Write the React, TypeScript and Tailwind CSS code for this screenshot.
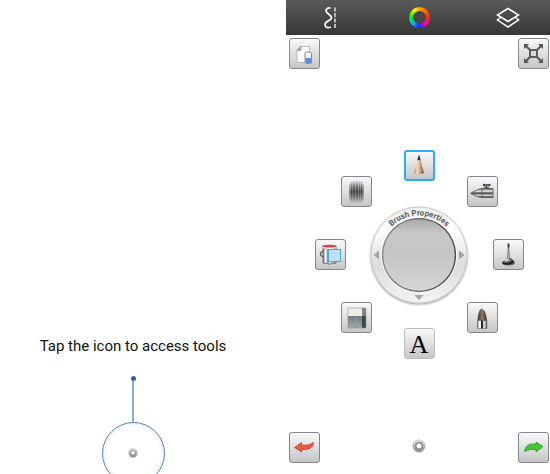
import React from 'react';

interface ToolButtonProps {
  label: string;
  active?: boolean;
  soft?: boolean;
  children: React.ReactNode;
}

const ToolButton: React.FC<ToolButtonProps> = ({ label, active, soft, children }) => {
  const border = active ? 'border-2 border-[#2ab0ee]' : soft ? 'border border-[#bcbcc0]' : 'border border-[#85858d]';

  return (
    <button
      type="button"
      aria-label={label}
      className={`flex size-[31px] shrink-0 items-center justify-center rounded-[3px] bg-linear-to-b from-[#f9f9f9] to-[#c6c6c8] ${border}`}
    >
      {children}
    </button>
  );
};

const Glyph: React.FC<{ children: React.ReactNode }> = ({ children }) => (
  <svg viewBox="1 1 29 29" className="size-[29px] shrink-0" fill="none" aria-hidden="true">
    {children}
  </svg>
);

const PencilIcon = () => (
  <Glyph>
    <defs>
      <linearGradient id="wood" x1="0" x2="1">
        <stop offset="0" stopColor="#a9825f" />
        <stop offset=".3" stopColor="#f6dfc4" />
        <stop offset=".55" stopColor="#dcb48c" />
        <stop offset="1" stopColor="#79482a" />
      </linearGradient>
    </defs>
    <path d="M15 5 L20 23 Q15 25.5 10 23 Z" fill="url(#wood)" />
    <path d="M15 4.5 L16.8 10.5 L15 9.8 L13.2 10.5 Z" fill="#2c2c30" />
  </Glyph>
);

const SmudgeIcon = () => (
  <Glyph>
    <defs>
      <linearGradient id="smudge" x1="0" x2="0" y1="0" y2="1">
        <stop offset="0" stopColor="#333" stopOpacity=".05" />
        <stop offset=".3" stopColor="#333" stopOpacity=".8" />
        <stop offset=".5" stopColor="#1c1c1c" />
        <stop offset=".7" stopColor="#333" stopOpacity=".8" />
        <stop offset="1" stopColor="#333" stopOpacity=".05" />
      </linearGradient>
    </defs>
    <rect x="9" y="5" width="13" height="22" fill="url(#smudge)" opacity=".6" />
    <path
      d="M8 8h1v16H8zM10 6h1v19h-1zM12 4h2v23h-2zM15 4h2v23h-2zM18 5h1v22h-1zM20 5h1v21h-1zM22 8h1v16h-1z"
      fill="url(#smudge)"
      opacity=".45"
    />
  </Glyph>
);

const AirbrushIcon = () => (
  <Glyph>
    <defs>
      <linearGradient id="airbrush" x1="0" x2="0" y1="0" y2="1">
        <stop offset="0" stopColor="#555" />
        <stop offset=".3" stopColor="#f1f1f1" />
        <stop offset=".52" stopColor="#3d3d3d" />
        <stop offset=".75" stopColor="#e2e2e2" />
        <stop offset="1" stopColor="#222" />
      </linearGradient>
    </defs>
    <path
      d="M4 17 L11 13.5 Q13 12.5 16 12.5 H26 V21.5 H15 Q11 21.5 4 17.7 Z"
      fill="url(#airbrush)"
      stroke="#555"
      strokeWidth=".8"
    />
    <path d="M15 13v8.4" stroke="#555" strokeWidth=".8" />
    <path d="M16.5 9h6M19.5 8v5M17 11.5h5" stroke="#555" strokeWidth="1.5" />
    <circle cx="17" cy="9" r="1.2" fill="#444" />
    <circle cx="22.5" cy="9" r="1.2" fill="#444" />
  </Glyph>
);

const FillIcon = () => (
  <Glyph>
    <defs>
      <linearGradient id="can" x1="0" x2="1">
        <stop offset="0" stopColor="#666" />
        <stop offset=".2" stopColor="#fff" />
        <stop offset=".35" stopColor="#999" />
        <stop offset=".55" stopColor="#f5f5f5" />
        <stop offset="1" stopColor="#777" />
      </linearGradient>
    </defs>
    <path d="M8 12 Q5 13 5.5 16 L8 18" stroke="#555" strokeWidth="1.2" />
    <path d="M8 9 H21 V24 Q14 26 8 24 Z" fill="url(#can)" stroke="#666" strokeWidth=".8" />
    <path d="M7.5 9.500 Q14 11.500 21.500 9.500 V7 H7.500 Z" fill="#f4f4f4" stroke="#888" strokeWidth=".6" />
    <path d="M8 6.500 Q14 5 21 6.500 V8 Q14 9 8 8 Z" fill="#cf4642" />
    <rect x="13.5" y="10.5" width="12" height="12" fill="#b9e0f4" stroke="#4ba7d7" />
  </Glyph>
);

const PaintIcon = () => (
  <Glyph>
    <defs>
      <radialGradient id="foot" cx=".35" cy=".25" r=".8">
        <stop offset="0" stopColor="#fff" />
        <stop offset=".3" stopColor="#888" />
        <stop offset=".65" stopColor="#151515" />
        <stop offset="1" stopColor="#777" />
      </radialGradient>
    </defs>
    <path d="M15.500 5L14.500 20H16.500Z" fill="#ddd" stroke="#707070" strokeWidth=".9" />
    <path d="M15.500 4.500v4" stroke="#333" strokeWidth="1.8" />
    <path d="M13.5 19 H17.5 Q20 20.5 22 23.5 Q22 26.5 15.5 26.5 Q9 26.5 9 23.5 Q11 20.5 13.5 19 Z" fill="url(#foot)" />
  </Glyph>
);

const EraserIcon = () => (
  <Glyph>
    <defs>
      <linearGradient id="eraser" x1="0" x2="0" y1="0" y2="1">
        <stop offset="0" stopColor="#727b7f" />
        <stop offset="1" stopColor="#a5a9ab" />
      </linearGradient>
    </defs>
    <path d="M7 6h14v8H7z" fill="#efede3" />
    <path d="M7 14h14v12H7z" fill="url(#eraser)" />
    <path d="M21 6h4v8h-4z" fill="#7b868c" />
    <path d="M21 14h4v12h-4z" fill="#39474f" />
    <path d="M15 14v12" stroke="#8f9698" />
    <path d="M7 6h18v20H7z" stroke="#8e9294" strokeWidth=".6" />
  </Glyph>
);

const BrushIcon = () => (
  <Glyph>
    <defs>
      <linearGradient id="bristle" x1="0" x2="1">
        <stop offset="0" stopColor="#3f352d" />
        <stop offset=".5" stopColor="#8f7966" />
        <stop offset="1" stopColor="#3a3029" />
      </linearGradient>
      <linearGradient id="ferrule" x1="0" x2="1">
        <stop offset="0" stopColor="#777" />
        <stop offset=".2" stopColor="#fff" />
        <stop offset=".35" stopColor="#eee" />
        <stop offset=".42" stopColor="#222" />
        <stop offset=".58" stopColor="#333" />
        <stop offset=".65" stopColor="#fff" />
        <stop offset="1" stopColor="#555" />
      </linearGradient>
    </defs>
    <path d="M10.5 19 Q11 8 14.5 6.5 Q19 7.5 20 19 Z" fill="url(#bristle)" />
    <path d="M10.5 18.500h9.500V26.500h-9.500z" fill="url(#ferrule)" stroke="#555" strokeWidth=".5" />
  </Glyph>
);

const NewSketchIcon = () => (
  <Glyph>
    <path d="M11 8.5 H20.5 V24.5 H8 V12 Z" fill="#fbfbfb" stroke="#b9bbbe" />
    <path d="M12 8 V12.500 H8 Z" fill="#a4a4a8" stroke="#9c9ca0" strokeWidth=".6" />
    <rect x="16" y="14" width="6.5" height="11.5" rx="1.5" fill="#f1f3f5" stroke="#858b94" />
    <path d="M16.5 20h5.500v4q0 1-1 1h-3.500q-1 0-1-1z" fill="#5b8fdc" />
  </Glyph>
);

const FullScreenIcon = () => (
  <Glyph>
    <path d="M8 8l5 5M23 8l-5 5M8 23l5-5M23 23l-5-5" stroke="#5c5c5c" strokeWidth="2.2" />
    <path d="M6 6h5l-5 5zM25 6h-5l5 5zM6 25h5l-5-5zM25 25h-5l5-5z" fill="#555" />
    <rect x="12" y="12" width="7" height="7" fill="#d9d9d9" stroke="#5c5c5c" strokeWidth="2" />
  </Glyph>
);

const UndoIcon = () => (
  <Glyph>
    <path
      d="M5.500 15.500 L12.500 10.500 V13 Q20 14 24.500 10.500 Q24 18.500 12.500 17.500 V20 Z"
      fill="#ec5a45"
      stroke="#c53a2a"
      strokeWidth=".8"
      strokeLinejoin="round"
    />
  </Glyph>
);

const RedoIcon = () => (
  <Glyph>
    <path
      d="M25 14.500 L18 10 V12 Q7 11 6.500 19.500 Q12 16.500 18 17.500 V20 Z"
      fill="#43c63a"
      stroke="#249724"
      strokeWidth=".8"
      strokeLinejoin="round"
    />
  </Glyph>
);

const Puck: React.FC<{ className: string }> = ({ className }) => (
  <svg viewBox="0 0 14 14" className={className} aria-hidden="true">
    <defs>
      <linearGradient id="puck" x1="0" x2="0" y1="0" y2="1">
        <stop offset="0" stopColor="#e6e6e6" />
        <stop offset="1" stopColor="#858585" />
      </linearGradient>
    </defs>
    <circle cx="7" cy="7" r="6.2" fill="url(#puck)" stroke="#b5b5b5" strokeWidth=".6" />
    <circle cx="7" cy="6.8" r="3.2" fill="#fafafa" stroke="#7a7a7a" strokeWidth="1.2" />
  </svg>
);

const BrushWheel = () => (
  <svg viewBox="0 0 104 104" className="size-[104px]" role="img" aria-label="Brush Properties">
    <defs>
      <linearGradient id="rim" x1="0" x2="0" y1="0" y2="1">
        <stop offset="0" stopColor="#eee" />
        <stop offset=".25" stopColor="#fff" />
        <stop offset=".6" stopColor="#dedcdc" />
        <stop offset="1" stopColor="#f4f2f2" />
      </linearGradient>
      <linearGradient id="well" x1="0" x2="0" y1="0" y2="1">
        <stop offset="0" stopColor="#a8a8a8" />
        <stop offset=".2" stopColor="#c8c8c8" />
        <stop offset=".5" stopColor="#c5c5c5" />
        <stop offset="1" stopColor="#d6d6d6" />
      </linearGradient>
      <linearGradient id="wellEdge" x1="0" x2="1" y1="0" y2="0">
        <stop offset="0" stopColor="#8a8a8a" />
        <stop offset="1" stopColor="#4c4c4c" />
      </linearGradient>
      <filter id="wheelShadow" x="-10%" y="-10%" width="120%" height="120%">
        <feDropShadow dx="0" dy="1" stdDeviation="1.2" floodColor="#000" floodOpacity=".45" />
      </filter>
      <path id="labelArc" d="M12.5 52 A39.5 39.5 0 0 1 91.5 52" />
    </defs>
    <circle cx="52" cy="52" r="48" fill="url(#rim)" stroke="#c9c9c9" strokeWidth="1" filter="url(#wheelShadow)" />
    <circle cx="52" cy="52" r="36.5" fill="url(#well)" stroke="url(#wellEdge)" strokeWidth="1.5" />
    <circle cx="52" cy="52" r="37.8" fill="none" stroke="#fff" strokeWidth=".8" />
    <path d="M12 47.500v9L6.500 52zM92 47.500v9l5.500-4.500zM47.500 92h9L52 97z" fill="#a3a3a3" />
    <text className="fill-[#5c5c5c] font-['Roboto',sans-serif] text-[8px] font-bold" textAnchor="middle">
      <textPath href="#labelArc" startOffset="50%">
        Brush Properties
      </textPath>
    </text>
  </svg>
);

const TopBar = () => (
  <header className="flex h-[35px] items-center justify-between bg-linear-to-b from-[#5a5a5a] to-[#373737] pr-[30px] pl-8">
    <button type="button" aria-label="Brush stroke">
      <svg viewBox="0 0 24 24" className="size-6" fill="none" aria-hidden="true">
        <path
          d="M12.500 2C9 1.500 7 4 8.500 6C10 8.500 14 9.500 13.500 12C13 15 7 15 7 18.500C7 21.500 10 22.500 13 21"
          stroke="#f2f2f2"
          strokeWidth="1.8"
        />
        <path d="M17 1.500v21" stroke="#b9b9b9" strokeWidth="2" strokeDasharray="4 1.500" />
      </svg>
    </button>
    <button type="button" aria-label="Colour">
      <span className="block size-[21px] rounded-full bg-[conic-gradient(#ff9d00,#ff2a00_25%,#ff00b0_37%,#1530ff_52%,#00b8ff_62%,#18e818_76%,#f4ef00_92%,#ff9d00)] p-1">
        <span className="block size-full rounded-full bg-[#474747]" />
      </span>
    </button>
    <button type="button" aria-label="Layers">
      <svg viewBox="0 0 24 24" className="size-6" fill="none" stroke="#fff" strokeWidth="1.5" aria-hidden="true">
        <path d="M12 2.500L22.500 9L12 15.500L1.500 9Z" />
        <path d="M4.500 11.500L1.500 14L12 21L22.500 14L19.500 11.500" />
      </svg>
    </button>
  </header>
);

const ToolRing = () => (
  <div className="grid place-items-center">
    <div className="col-start-1 row-start-1 flex h-[209px] flex-col justify-between">
      <ToolButton label="Pencil" active>
        <PencilIcon />
      </ToolButton>
      <ToolButton label="Text" soft>
        <span className="pt-0.5 font-['Liberation_Serif',serif] text-[26px] leading-7 text-black">A</span>
      </ToolButton>
    </div>
    <div className="col-start-1 row-start-1 flex w-[209px] justify-between">
      <ToolButton label="Fill">
        <FillIcon />
      </ToolButton>
      <ToolButton label="Paint">
        <PaintIcon />
      </ToolButton>
    </div>
    <div className="col-start-1 row-start-1 grid size-[157px] grid-cols-[auto_auto] content-between justify-between">
      <ToolButton label="Smudge">
        <SmudgeIcon />
      </ToolButton>
      <ToolButton label="Airbrush">
        <AirbrushIcon />
      </ToolButton>
      <ToolButton label="Eraser">
        <EraserIcon />
      </ToolButton>
      <ToolButton label="Brush">
        <BrushIcon />
      </ToolButton>
    </div>
    <div className="col-start-1 row-start-1">
      <BrushWheel />
    </div>
  </div>
);

export default function App() {
  return (
    <main className="grid h-screen grid-cols-[13fr_12fr] overflow-hidden bg-white font-['Roboto',sans-serif]">
      <section className="flex flex-col items-center justify-end overflow-hidden pr-5">
        <p className="text-[15px] leading-5 text-[#111]">Tap the icon to access tools</p>
        <span className="mt-5 size-[5px] rounded-full bg-[#2d65a8]" />
        <span className="h-[41px] w-0.5 bg-[#8fadd3]" />
        <button
          type="button"
          aria-label="Access tools"
          className="-mb-[11px] flex size-[63px] shrink-0 items-center justify-center rounded-full border border-[#5785c0] pb-0.5 shadow-[inset_0_0_4px_#ddd]"
        >
          <Puck className="size-[10px]" />
        </button>
      </section>

      <section className="flex flex-col">
        <TopBar />
        <div className="flex justify-between pt-[3px] pr-px pl-[3px]">
          <ToolButton label="New sketch">
            <NewSketchIcon />
          </ToolButton>
          <ToolButton label="Full screen">
            <FullScreenIcon />
          </ToolButton>
        </div>
        <div className="flex flex-1 items-center justify-center pt-2 pl-0.5">
          <ToolRing />
        </div>
        <div className="flex items-center justify-between pr-px pb-[11px] pl-[3px]">
          <ToolButton label="Undo">
            <UndoIcon />
          </ToolButton>
          <button type="button" aria-label="Tools" className="pb-1">
            <Puck className="size-[14px]" />
          </button>
          <ToolButton label="Redo">
            <RedoIcon />
          </ToolButton>
        </div>
      </section>
    </main>
  );
}
